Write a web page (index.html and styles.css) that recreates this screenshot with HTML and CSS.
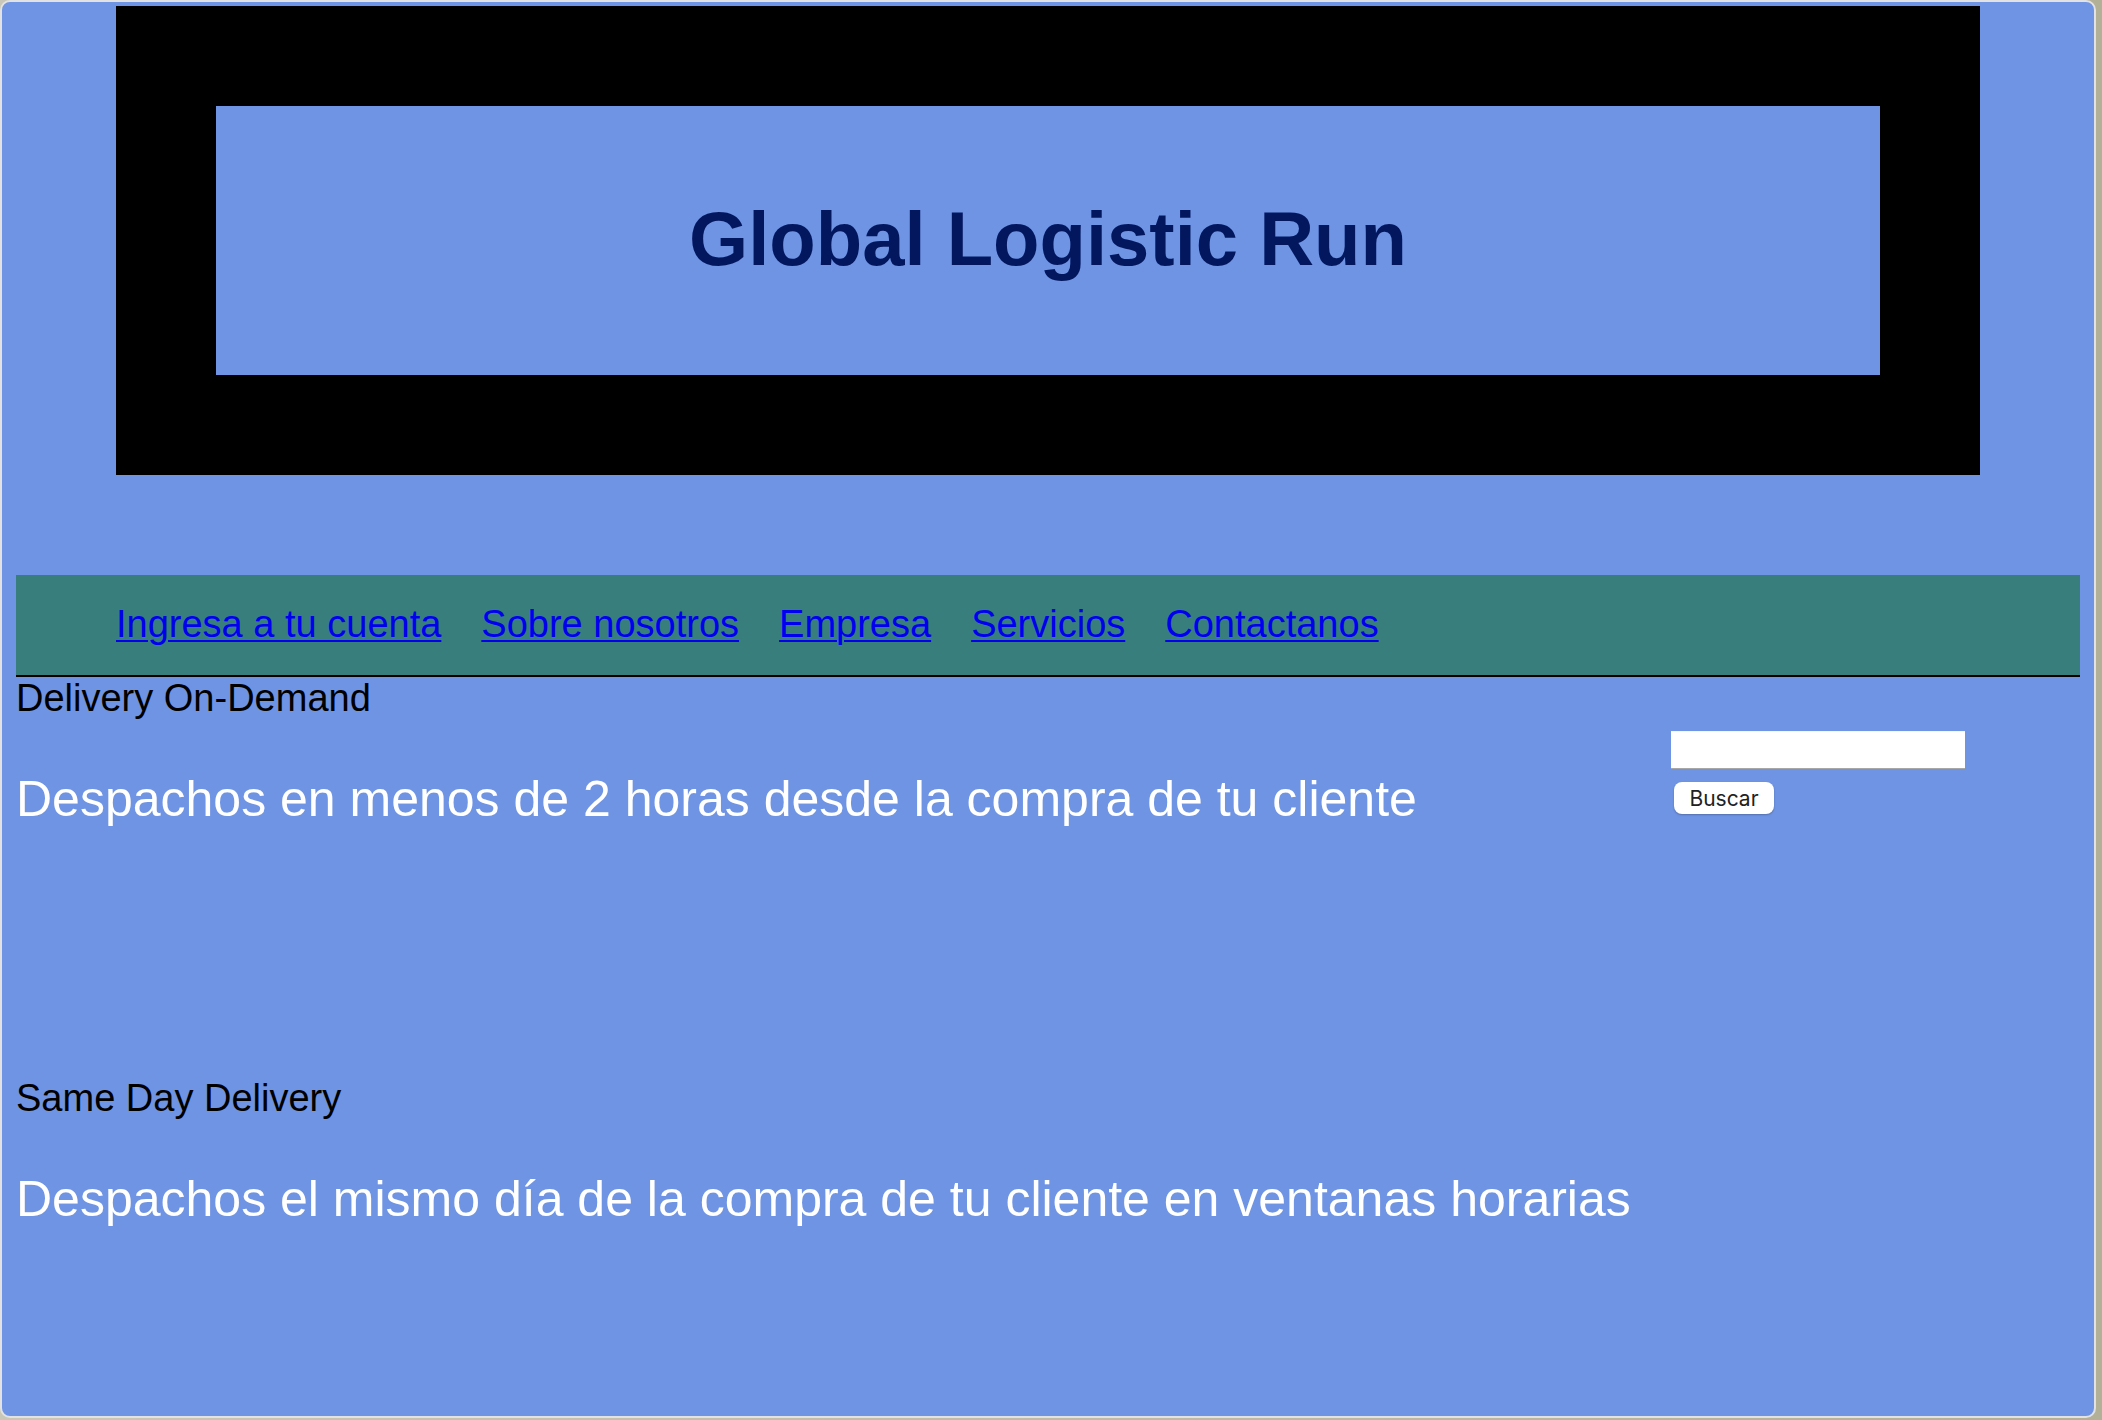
FILE: index.html
```html
<!DOCTYPE html>
<html lang="es">
<head>
<meta charset="utf-8">
<title>Global Logistic Run</title>
<link rel="stylesheet" href="styles.css">
</head>
<body>
<div class="window">
  <header class="masthead">
    <div class="masthead-inner">
      <h1 class="title">Global Logistic Run</h1>
    </div>
  </header>
  <nav class="mainnav">
    <a href="#">Ingresa a tu cuenta</a>
    <a href="#">Sobre nosotros</a>
    <a href="#">Empresa</a>
    <a href="#">Servicios</a>
    <a href="#">Contactanos</a>
  </nav>
  <section class="service">
    <div class="service-text">
      <p class="service-name">Delivery On-Demand</p>
      <h2 class="service-desc">Despachos en menos de 2 horas desde la compra de tu cliente</h2>
    </div>
    <form class="search">
      <input class="search-input" type="text" aria-label="Buscar">
      <button class="search-button" type="button">Buscar</button>
    </form>
  </section>
  <section class="service">
    <div class="service-text">
      <p class="service-name">Same Day Delivery</p>
      <h2 class="service-desc">Despachos el mismo día de la compra de tu cliente en ventanas horarias</h2>
    </div>
  </section>
</div>
</body>
</html>
```

FILE: styles.css
```css
html, body {
  margin: 0;
  padding: 0;
}

body {
  background: linear-gradient(90deg, #c9c7b8 0%, #b3b098 100%);
  width: 2102px;
  height: 1420px;
  overflow: hidden;
  font-family: "Liberation Sans", Arial, sans-serif;
}

.window {
  box-sizing: border-box;
  width: 2096px;
  height: 1418px;
  border: 2px solid #e2e2e2;
  border-radius: 10px;
  background: #6f94e4;
  padding: 4px 14px 0 14px;
  overflow: hidden;
}

.masthead {
  margin: 0 100px;
  border: 100px solid #000;
  height: 269px;
}

.masthead-inner {
  box-sizing: border-box;
  height: 100%;
  padding-bottom: 4px;
  display: flex;
  align-items: center;
  justify-content: center;
}

.title {
  margin: 0;
  font-size: 76px;
  font-weight: bold;
  color: #03175f;
  line-height: 1;
}

.mainnav {
  box-sizing: border-box;
  margin-top: 100px;
  height: 102px;
  padding-bottom: 2px;
  background: #387e7d;
  border-bottom: 2px solid #000;
  display: flex;
  align-items: center;
  gap: 40px;
  padding-left: 100px;
}

.mainnav a {
  color: #0000ee;
  font-size: 38px;
  text-decoration: underline;
  text-decoration-thickness: 2px;
  text-underline-offset: 3px;
}

.service {
  height: 400px;
  display: grid;
  grid-template-columns: 1655px 1fr;
}

.service-name {
  margin: 0;
  font-size: 38px;
  color: #000;
}

.service-desc {
  margin: 50px 0 0 0;
  font-size: 50px;
  font-weight: normal;
  color: #fff;
}

.search {
  padding-top: 54px;
  display: flex;
  flex-direction: column;
  align-items: flex-start;
}

.search-input {
  box-sizing: border-box;
  width: 294px;
  height: 38px;
  margin: 0;
  border: none;
  border-top: 1px solid #f4f6fb;
  border-bottom: 1px solid #a7a7a7;
  background: #fff;
  outline: none;
}

.search-button {
  margin: 13px 0 0 3px;
  width: 100px;
  height: 32px;
  border: none;
  border-radius: 8px;
  background: #fff;
  color: #222;
  font-family: Inter, "Open Sans", sans-serif;
  font-size: 21px;
  padding: 0;
  box-shadow: 0 1px 2px rgba(0, 0, 0, 0.25);
}
```
